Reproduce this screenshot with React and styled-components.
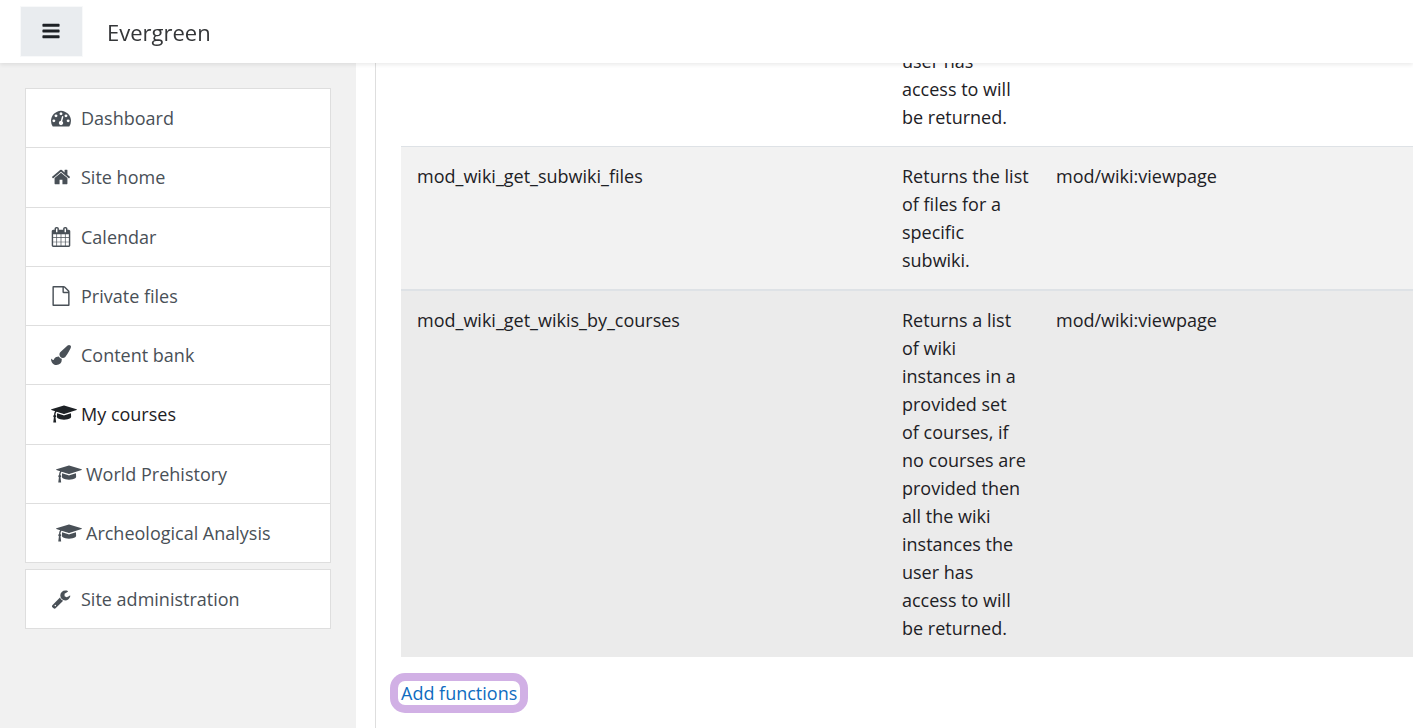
import React, { Fragment } from "react";
import styled, { createGlobalStyle, css } from "styled-components";

const GlobalStyle = createGlobalStyle`
  * {
    box-sizing: border-box;
  }
  body {
    margin: 0;
    background-color: #fff;
    color: #1d2125;
    font-family: "Open Sans", "Noto Sans", sans-serif;
    font-size: 18px;
    line-height: 28px;
    overflow: hidden;
  }
`;

const Header = styled.header`
  display: flex;
  align-items: center;
  position: fixed;
  z-index: 1;
  top: 0;
  width: 100%;
  height: 63px;
  padding: 0 20px;
  background-color: white;
  box-shadow: 0 2px 4px rgba(0, 0, 0, 0.08);
`;

const MenuButton = styled.button`
  display: flex;
  align-items: center;
  justify-content: center;
  width: 63px;
  height: 51px;
  padding: 0 1px 1px 0;
  border: 1px solid #f8f9fa;
  background-color: #e9ecef;
  color: #1d2125;
`;

const SiteName = styled.a`
  margin-left: 24px;
  font-size: 22px;
  line-height: 32px;
  color: #343638;
  text-decoration: none;
`;

const Page = styled.div`
  display: flex;
  height: 100vh;
`;

const Drawer = styled.nav`
  flex: 0 0 356px;
  padding: 88px 25px 25px;
  background-color: #f1f1f1;
`;

const NavList = styled.ul`
  display: grid;
  grid-auto-rows: 1fr;
  min-height: ${(props) => props.$minHeight || "0"};
  margin: 0 0 6px;
  padding: 0;
  border: 1px solid #dedede;
  border-bottom: 0;
  list-style: none;
`;

const NavItem = styled.li`
  display: flex;
  background-color: white;
  border-bottom: 1px solid #dedede;
`;

const NavLink = styled.a`
  display: flex;
  flex: 1;
  align-items: center;
  gap: 4px;
  min-height: 58px;
  padding-left: ${(props) => (props.$nested ? "30px" : "25px")};
  color: ${(props) => (props.$active ? "#1d2125" : "#495057")};
  text-decoration: none;
`;

const IconSlot = styled.span`
  display: flex;
  width: 26px;
`;

const Main = styled.main`
  flex: 1;
  min-width: 0;
  margin-left: 19px;
  padding: 32px 0 0 25px;
  border-left: 1px solid #dedede;
  overflow: hidden;
`;

const Table = styled.table`
  width: 100%;
  border-collapse: separate;
  border-spacing: 0;
  table-layout: fixed;
`;

const Cell = styled.td`
  padding: 15px 16px;
  vertical-align: top;
  white-space: pre;
`;

const Row = styled.tr`
  ${(props) =>
    props.$shade &&
    css`
      background-color: ${props.$shade};
    `}
  ${Cell} {
    border-top: ${(props) => props.$line || 0}px solid #dee2e6;
  }
`;

const NameCol = styled.col`
  width: 485px;
`;

const DescriptionCol = styled.col`
  width: 154px;
`;

const AddLink = styled.a`
  display: inline-block;
  margin-top: 24px;
  margin-left: -3px;
  padding: 0 3px;
  border-radius: 7px;
  box-shadow: 0 0 0 8px #d1b0e5;
  line-height: 24px;
  color: #0f6cbf;
  text-decoration: none;
`;

const icons = {
  bars: "M1664 1344v128q0 26-19 45t-45 19h-1408q-26 0-45-19t-19-45v-128q0-26 19-45t45-19h1408q26 0 45 19t19 45zm0-512v128q0 26-19 45t-45 19h-1408q-26 0-45-19t-19-45v-128q0-26 19-45t45-19h1408q26 0 45 19t19 45zm0-512v128q0 26-19 45t-45 19h-1408q-26 0-45-19t-19-45v-128q0-26 19-45t45-19h1408q26 0 45 19t19 45z",
  dashboard:
    "M384 1152q0-53-37.5-90.5t-90.5-37.5-90.5 37.5-37.5 90.5 37.5 90.5 90.5 37.5 90.5-37.5 37.5-90.5zm192-448q0-53-37.5-90.5t-90.5-37.5-90.5 37.5-37.5 90.5 37.5 90.5 90.5 37.5 90.5-37.5 37.5-90.5zm428 481l101-382q6-26-7.5-48.5t-38.5-29.5-48 6.5-30 39.5l-101 382q-60 5-107 43.5t-63 98.5q-20 77 20 146t117 89 146-20 89-117q16-60-6-117t-72-91zm660-33q0-53-37.5-90.5t-90.5-37.5-90.5 37.5-37.5 90.5 37.5 90.5 90.5 37.5 90.5-37.5 37.5-90.5zm-640-640q0-53-37.5-90.5t-90.5-37.5-90.5 37.5-37.5 90.5 37.5 90.5 90.5 37.5 90.5-37.5 37.5-90.5zm448 192q0-53-37.5-90.5t-90.5-37.5-90.5 37.5-37.5 90.5 37.5 90.5 90.5 37.5 90.5-37.5 37.5-90.5zm320 448q0 261-141 483-19 29-54 29h-1402q-35 0-54-29-141-221-141-483 0-182 71-348t191-286 286-191 348-71 348 71 286 191 191 286 71 348z",
  home: "M1472 992v480q0 26-19 45t-45 19h-384v-384h-256v384h-384q-26 0-45-19t-19-45v-480q0-1 .5-3t.5-3l575-474 575 474q1 2 1 6zm223-69l-62 74q-8 9-21 11h-3q-13 0-21-7l-692-577-692 577q-12 8-24 7-13-2-21-11l-62-74q-8-10-7-23.5t11-21.5l719-599q32-26 76-26t76 26l244 204v-195q0-14 9-23t23-9h192q14 0 23 9t9 23v408l219 182q10 8 11 21.5t-7 23.5z",
  calendar:
    "M192 1664h288v-288h-288v288zm352 0h320v-288h-320v288zm-352-352h288v-320h-288v320zm352 0h320v-320h-320v320zm-352-384h288v-288h-288v288zm736 736h320v-288h-320v288zm-384-736h320v-288h-320v288zm768 736h288v-288h-288v288zm-384-352h320v-320h-320v320zm-352-864v-288q0-13-9.5-22.5t-22.5-9.5h-64q-13 0-22.5 9.5t-9.5 22.5v288q0 13 9.5 22.5t22.5 9.5h64q13 0 22.5-9.5t9.5-22.5zm736 864h288v-320h-288v320zm-384-384h320v-288h-320v288zm384 0h288v-288h-288v288zm32-480v-288q0-13-9.5-22.5t-22.5-9.5h-64q-13 0-22.5 9.5t-9.5 22.5v288q0 13 9.5 22.5t22.5 9.5h64q13 0 22.5-9.5t9.5-22.5zm384-64v1280q0 52-38 90t-90 38h-1408q-52 0-90-38t-38-90v-1280q0-52 38-90t90-38h128v-96q0-66 47-113t113-47h64q66 0 113 47t47 113v96h384v-96q0-66 47-113t113-47h64q66 0 113 47t47 113v96h128q52 0 90 38t38 90z",
  file: "M1596 380q28 28 48 76t20 88v1152q0 40-28 68t-68 28h-1344q-40 0-68-28t-28-68v-1600q0-40 28-68t68-28h896q40 0 88 20t76 48zm-444-244v376h376q-10-29-22-41l-313-313q-12-12-41-22zm384 1528v-1024h-416q-40 0-68-28t-28-68v-416h-768v1536h1280z",
  brush:
    "M1615 0q70 0 122.5 46.5t52.5 116.5q0 63-45 151-332 629-465 752-97 91-218 91-126 0-216.5-92.5t-90.5-219.5q0-128 92-212l638-579q59-54 130-54zm-909 1034q39 76 106.5 130t150.5 76l1 71q4 213-129.5 347t-348.5 134q-123 0-218-46.5t-152.5-127.5-86.5-183-29-220q7 5 41 30t62 44.5 59 36.5 46 17q41 0 55-37 25-66 57.5-112.5t69.5-76 88-47.5 103-25.5 125-10.5z",
  cap: "M1774 836l18 316q4 69-82 128t-235 93.5-323 34.5-323-34.5-235-93.5-82-128l18-316 574 181q22 7 48 7t48-7zm530-324q0 23-22 31l-1120 352q-4 1-10 1t-10-1l-652-206q-43 34-71 111.5t-34 178.5q63 36 63 109 0 69-58 107l58 433q2 14-8 25-9 11-24 11h-192q-15 0-24-11-10-11-8-25l58-433q-58-38-58-107 0-73 65-111 11-207 98-330l-333-104q-22-8-22-31t22-31l1120-352q4-1 10-1t10 1l1120 352q22 8 22 31z",
  wrench:
    "M448 1472q0-26-19-45t-45-19-45 19-19 45 19 45 45 19 45-19 19-45zm644-420l-682 682q-37 37-90 37-52 0-91-37l-106-108q-38-36-38-90 0-53 38-91l681-681q39 98 114.5 173.5t173.5 114.5zm634-435q0 39-23 106-47 134-164.5 217.5t-258.5 83.5q-185 0-316.5-131.5t-131.5-316.5 131.5-316.5 316.5-131.5q58 0 121.5 16.5t107.5 46.5q16 11 16 28t-16 28l-293 169v224l193 107q5-3 79-48.5t135.5-81 70.5-35.5q15 0 23.5 10t8.5 25z",
};

const Icon = ({ name }) => {
  const wide = name === "cap";
  return (
    <svg
      width={wide ? 26 : 20}
      height="20"
      viewBox={wide ? "0 0 2304 1792" : "0 0 1792 1792"}
      fill="currentColor"
      aria-hidden="true"
    >
      <path d={icons[name]} />
    </svg>
  );
};

const mainLinks = [
  { icon: "dashboard", label: "Dashboard" },
  { icon: "home", label: "Site home" },
  { icon: "calendar", label: "Calendar" },
  { icon: "file", label: "Private files" },
  { icon: "brush", label: "Content bank" },
  { icon: "cap", label: "My courses", active: true },
  { icon: "cap", label: "World Prehistory", nested: true },
  { icon: "cap", label: "Archeological Analysis", nested: true },
];

const adminLinks = [{ icon: "wrench", label: "Site administration" }];

const functions = [
  {
    name: "",
    description: "user has\naccess to will\nbe returned.",
    capability: "",
  },
  {
    name: "mod_wiki_get_subwiki_files",
    description: "Returns the list\nof files for a\nspecific\nsubwiki.",
    capability: "mod/wiki:viewpage",
    shade: "#f2f2f2",
    line: 1,
  },
  {
    name: "mod_wiki_get_wikis_by_courses",
    description:
      "Returns a list\nof wiki\ninstances in a\nprovided set\nof courses, if\nno courses are\nprovided then\nall the wiki\ninstances the\nuser has\naccess to will\nbe returned.",
    capability: "mod/wiki:viewpage",
    shade: "#ebebeb",
    line: 2,
  },
];

const NavGroup = ({ links, minHeight }) => (
  <NavList $minHeight={minHeight}>
    {links.map((link) => (
      <NavItem key={link.label}>
        <NavLink href="#" $active={link.active} $nested={link.nested}>
          <IconSlot>
            <Icon name={link.icon} />
          </IconSlot>
          <span>{link.label}</span>
        </NavLink>
      </NavItem>
    ))}
  </NavList>
);

const App = () => {
  return (
    <Fragment>
      <GlobalStyle />
      <Header>
        <MenuButton type="button" aria-label="Side panel">
          <Icon name="bars" />
        </MenuButton>
        <SiteName href="#">Evergreen</SiteName>
      </Header>
      <Page>
        <Drawer>
          <NavGroup links={mainLinks} minHeight="475px" />
          <NavGroup links={adminLinks} />
        </Drawer>
        <Main>
          <Table>
            <colgroup>
              <NameCol />
              <DescriptionCol />
              <col />
            </colgroup>
            <tbody>
              {functions.map((fn, index) => (
                <Row key={index} $shade={fn.shade} $line={fn.line}>
                  <Cell>{fn.name}</Cell>
                  <Cell>{fn.description}</Cell>
                  <Cell>{fn.capability}</Cell>
                </Row>
              ))}
            </tbody>
          </Table>
          <AddLink href="#">Add functions</AddLink>
        </Main>
      </Page>
    </Fragment>
  );
};

export default App;
